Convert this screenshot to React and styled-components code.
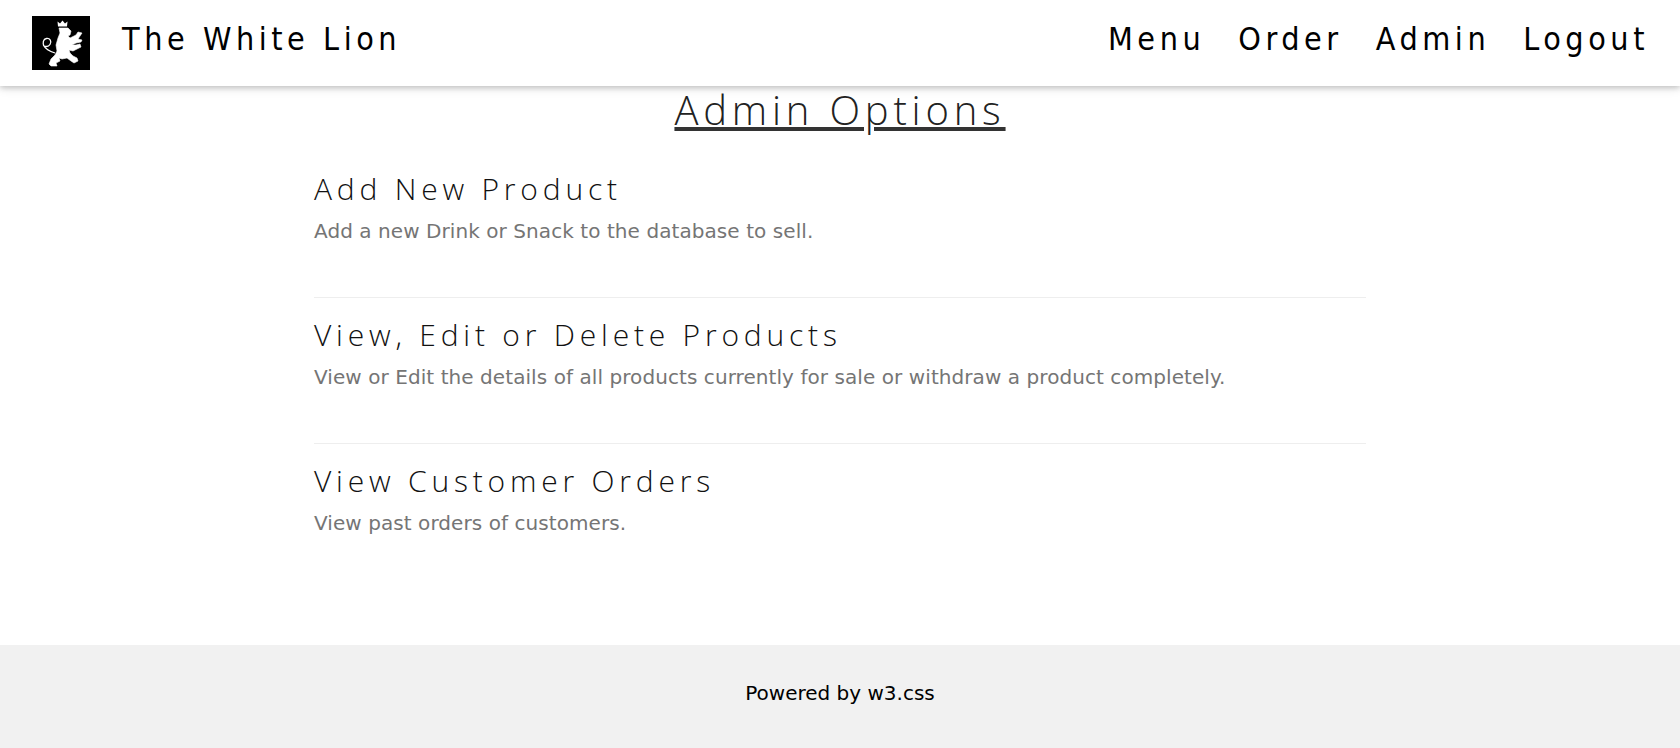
import React from "react";
import styled, { createGlobalStyle } from "styled-components";

const GlobalStyle = createGlobalStyle`
  html, body {
    margin: 0;
    padding: 0;
    font-family: "DejaVu Sans", Verdana, sans-serif;
    font-size: 20px;
    line-height: 1.5;
    color: #000;
    background: #fff;
  }
`;

const Page = styled.div`
  display: flex;
  flex-direction: column;
  min-height: 748px;
`;

const NavBar = styled.header`
  display: flex;
  align-items: center;
  justify-content: space-between;
  height: 86px;
  padding: 0 31px 0 32px;
  background: #fff;
  box-shadow: 0 2px 5px 0 rgba(0, 0, 0, 0.16), 0 2px 10px 0 rgba(0, 0, 0, 0.12);
  position: relative;
  box-sizing: border-box;
`;

const Brand = styled.div`
  display: flex;
  align-items: center;
  gap: 32px;
`;

const NavText = styled.a`
  display: block;
  padding-bottom: 8px;
  font-family: "DejaVu Sans Condensed", "DejaVu Sans", sans-serif;
  font-size: 32px;
  line-height: 40px;
  letter-spacing: 4.55px;
  color: #000;
  text-decoration: none;
  white-space: nowrap;
`;

const NavLinks = styled.nav`
  display: flex;
  gap: 33px;
`;

const Logo = styled.svg`
  display: block;
  width: 58px;
  height: 54px;
  background: #000;
`;

const Main = styled.main`
  flex: 1;
  width: 1052px;
  margin: 0 auto;
`;

const Title = styled.h1`
  margin: 0;
  font-family: "Open Sans", "Noto Sans", sans-serif;
  font-weight: 300;
  font-size: 40px;
  line-height: 48px;
  letter-spacing: 4.8px;
  color: #222;
  text-align: center;
  text-decoration: underline;
  text-decoration-color: #333;
  text-decoration-thickness: 4px;
`;

const OptionList = styled.ul`
  list-style: none;
  margin: 18px 0 0;
  padding: 0;
`;

const Option = styled.li`
  height: 146px;
  padding-top: 16px;
  box-sizing: border-box;
  border-bottom: 1px solid ${(p) => (p.$last ? "transparent" : "#eee")};
`;

const OptionName = styled.h3`
  margin: 0;
  font-family: "Open Sans", "Noto Sans", sans-serif;
  font-weight: 300;
  font-size: 30px;
  line-height: 42px;
  letter-spacing: 4.8px;
  color: #111;
`;

const OptionText = styled.p`
  margin: 6px 0 0;
  font-size: 20px;
  line-height: 30px;
  letter-spacing: 0.07px;
  color: #757575;
`;

const Footer = styled.footer`
  height: 103px;
  padding-bottom: 8px;
  box-sizing: border-box;
  display: flex;
  align-items: center;
  justify-content: center;
  background: #f1f1f1;
  font-size: 20px;
`;

const options = [
  ["Add New Product", "Add a new Drink or Snack to the database to sell."],
  [
    "View, Edit or Delete Products",
    "View or Edit the details of all products currently for sale or withdraw a product completely.",
  ],
  ["View Customer Orders", "View past orders of customers."],
];

const LionLogo = () => (
  <Logo viewBox="0 0 58 54">
    <g fill="#fff">
      <path d="M26 10.500l-.5-5 2.500 2 2.500-3 2.500 3 2.500-2-.5 5z" />
      <path
        stroke="#fff"
        strokeWidth="0.6"
        d="M27 12L36 12L39 15L38 19L36 20L38 22L44 19L46 16L50 17L48 20L46 23L50 24L49 26L44 27L40 29L44 29L48 28L49 31L45 33L41 35L37 34L38 37L41 40L45 42L46 45L42 47L39 45L35 42L30 43L27 42L28 45L24 47L25 50L19 50L17 48L19 43L23 39L25 35L24 29L26 22L28 17z"
      />
      <path
        fill="none"
        stroke="#fff"
        strokeWidth="1.300"
        d="M23 37c-3-1-9-3-11-7-1.500-3-1-7 2.500-7.500s5.500 3 3.500 6-5 2-7 1"
      />
    </g>
  </Logo>
);

export default function App() {
  return (
    <Page>
      <GlobalStyle />
      <NavBar>
        <Brand>
          <LionLogo />
          <NavText href="#">The White Lion</NavText>
        </Brand>
        <NavLinks>
          {["Menu", "Order", "Admin", "Logout"].map((l) => (
            <NavText href="#" key={l}>
              {l}
            </NavText>
          ))}
        </NavLinks>
      </NavBar>
      <Main>
        <Title>Admin Options</Title>
        <OptionList>
          {options.map(([name, text], i) => (
            <Option key={name} $last={i === options.length - 1}>
              <OptionName>{name}</OptionName>
              <OptionText>{text}</OptionText>
            </Option>
          ))}
        </OptionList>
      </Main>
      <Footer>Powered by w3.css</Footer>
    </Page>
  );
}
